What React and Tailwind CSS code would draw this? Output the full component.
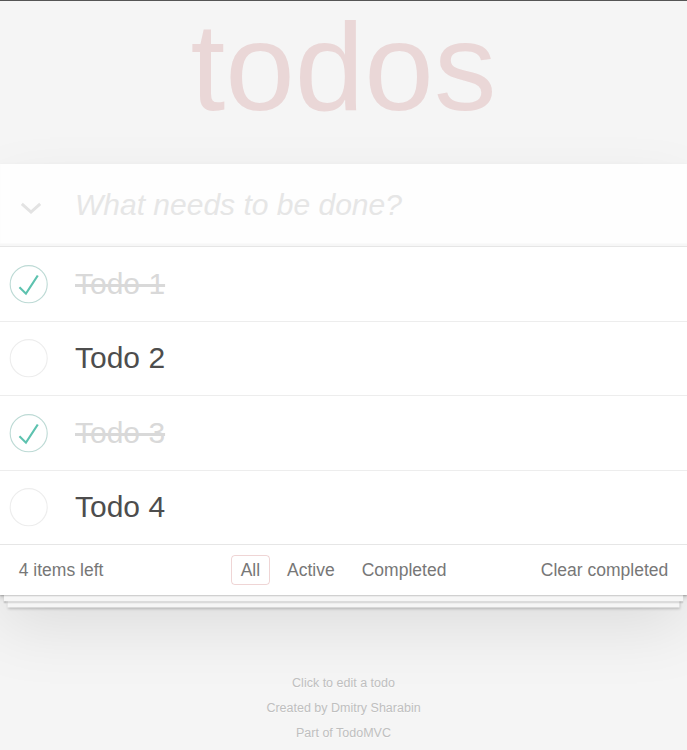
import { useState } from 'react'

const TODOS = [
  { id: 1, title: 'Todo 1', completed: true },
  { id: 2, title: 'Todo 2', completed: false },
  { id: 3, title: 'Todo 3', completed: true },
  { id: 4, title: 'Todo 4', completed: false },
]

function Toggle({ checked }) {
  return (
    <svg width="50" height="50" viewBox="-10 -18 100 135" className="shrink-0">
      <circle cx="50" cy="50" r="50" fill="none" stroke={checked ? '#bddad5' : '#ededed'} strokeWidth="3" />
      {checked && <path fill="#5dc2af" d="M72 25L42 71 27 56l-4 4 20 20 34-52z" />}
    </svg>
  )
}

function TodoItem({ todo, last }) {
  return (
    <li className={`flex items-center ${last ? '' : 'border-b-[1.25px] border-[#ededed]'}`}>
      <Toggle checked={todo.completed} />
      <label
        className={`ml-[25px] py-[18.75px] pr-[18.75px] text-[30px] leading-[36px] ${
          todo.completed ? 'text-[#d9d9d9] line-through' : 'text-[#4d4d4d]'
        }`}
      >
        {todo.title}
      </label>
    </li>
  )
}

export default function App() {
  const [todos] = useState(TODOS)

  return (
    <div className="min-h-screen bg-[#f5f5f5] text-[#4d4d4d] font-['Liberation_Sans',Arial,sans-serif] antialiased">
      <div className="h-px bg-[#555]" />

      {/* Title */}
      <h1 className="h-[162.5px] pt-[2px] text-center text-[125px] leading-[140px] font-thin text-[rgba(175,47,47,0.15)]">
        <span className="block -mt-[6.5px]">todos</span>
      </h1>

      <section className="bg-white shadow-[0_2.5px_5px_0_rgba(0,0,0,0.2),0_31.25px_62.5px_0_rgba(0,0,0,0.1)]">
        {/* New todo */}
        <div className="relative">
          <svg
            width="22" height="12" viewBox="0 0 22 12"
            className="absolute left-[19.5px] top-[38.5px]"
          >
            <polyline points="1.8,1.8 11,10 20.2,1.8" fill="none" stroke="#e3e3e3" strokeWidth="3" />
          </svg>
          <input
            className="block w-full h-[82.5px] pl-[75px] pr-[20px] py-[20px] text-[30px] leading-[42px] bg-[rgba(0,0,0,0.003)] outline-none shadow-[inset_0_-2.5px_1.25px_rgba(0,0,0,0.03)] placeholder:italic placeholder:text-[#e6e6e6]"
            placeholder="What needs to be done?"
          />
        </div>

        {/* List */}
        <ul className="border-t-[1.25px] border-[#e6e6e6]">
          {todos.map((t, i) => (
            <TodoItem key={t.id} todo={t} last={i === todos.length - 1} />
          ))}
        </ul>

        {/* Footer */}
        <footer className="grid grid-cols-[1fr_auto_1fr] items-center h-[51.25px] px-[18.75px] border-t-[1.25px] border-[#e6e6e6] text-[17.5px] text-[#777] shadow-[0_1.25px_1.25px_rgba(0,0,0,0.2),0_10px_0_-3.75px_#f6f6f6,0_11.25px_1.25px_-3.75px_rgba(0,0,0,0.2),0_20px_0_-7.5px_#f6f6f6,0_21.25px_2.5px_-7.5px_rgba(0,0,0,0.2)]">
          <span className="text-left">4 items left</span>
          <ul className="flex">
            <li>
              <a className="block m-[3.75px] px-[8.75px] py-[3.75px] leading-[20px] border-[1.25px] border-[rgba(175,47,47,0.2)] rounded-[3.75px]">All</a>
            </li>
            <li>
              <a className="block m-[3.75px] px-[8.75px] py-[3.75px] leading-[20px] border-[1.25px] border-transparent rounded-[3.75px]">Active</a>
            </li>
            <li>
              <a className="block m-[3.75px] px-[8.75px] py-[3.75px] leading-[20px] border-[1.25px] border-transparent rounded-[3.75px]">Completed</a>
            </li>
          </ul>
          <button className="justify-self-end leading-[25px]">Clear completed</button>
        </footer>
      </section>

      {/* Info */}
      <footer className="mt-[81.25px] flex flex-col gap-[12.5px] text-center text-[12.5px] leading-[12.5px] text-[#bfbfbf] [text-shadow:0_1.25px_0_rgba(255,255,255,0.5)]">
        <p>Click to edit a todo</p>
        <p>Created by <a>Dmitry Sharabin</a></p>
        <p>Part of <a>TodoMVC</a></p>
      </footer>
    </div>
  )
}
